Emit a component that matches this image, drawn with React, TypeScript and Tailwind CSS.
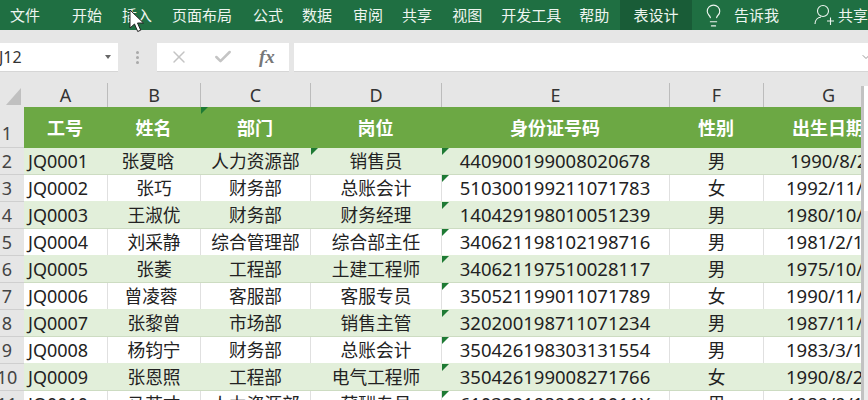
import React from 'react';
import { Check, ChevronDown, Lightbulb, X } from 'lucide-react';

const menuItems = [
  { label: '文件', cls: 'ml-[10px]' },
  { label: '开始', cls: 'ml-[32px]' },
  { label: '插入', cls: 'ml-[20px]' },
  { label: '页面布局', cls: 'ml-[20px]' },
  { label: '公式', cls: 'ml-[21px]' },
  { label: '数据', cls: 'ml-[19px]' },
  { label: '审阅', cls: 'ml-[21px]' },
  { label: '共享', cls: 'ml-[19px]' },
  { label: '视图', cls: 'ml-[20px]' },
  { label: '开发工具', cls: 'ml-[19px]' },
  { label: '帮助', cls: 'ml-[18px]' },
];

const colLetters = [
  { label: 'A', cls: 'w-[84px]' },
  { label: 'B', cls: 'w-[93px]' },
  { label: 'C', cls: 'w-[110px]' },
  { label: 'D', cls: 'w-[131px]' },
  { label: 'E', cls: 'w-[228px]' },
  { label: 'F', cls: 'w-[94px]' },
  { label: 'G', cls: 'w-[130px]' },
];

const rows = [
  ['JQ0001', '张夏晗', '人力资源部', '销售员', '440900199008020678', '男', '1990/8/2'],
  ['JQ0002', '张巧', '财务部', '总账会计', '510300199211071783', '女', '1992/11/'],
  ['JQ0003', '王淑优', '财务部', '财务经理', '140429198010051239', '男', '1980/10/'],
  ['JQ0004', '刘采静', '综合管理部', '综合部主任', '340621198102198716', '男', '1981/2/1'],
  ['JQ0005', '张萎', '工程部', '土建工程师', '340621197510028117', '男', '1975/10/'],
  ['JQ0006', '曾凌蓉', '客服部', '客服专员', '350521199011071789', '女', '1990/11/'],
  ['JQ0007', '张黎曾', '市场部', '销售主管', '320200198711071234', '男', '1987/11/'],
  ['JQ0008', '杨钧宁', '财务部', '总账会计', '350426198303131554', '男', '1983/3/1'],
  ['JQ0009', '张恩照', '工程部', '电气工程师', '350426199008271766', '女', '1990/8/2'],
  ['JQ0010', '马若才', '人力资源部', '薪酬专员', '61032219890910011X', '男', '1989/9/1'],
];

const Flag = () => (
  <span className="absolute left-0 top-0 w-[7px] h-[7px] bg-[#1e7a34] [clip-path:polygon(0_0,100%_0,0_100%)]" />
);

const RowNum = ({ n, cls }: { n: number; cls: string }) => (
  <div className={`w-[24px] shrink-0 flex justify-center pr-[10px] bg-[#e6e6e6] border-b border-[#cfcfcf] text-[18px] text-[#444] ${cls}`}>
    {n}
  </div>
);

const App: React.FC = () => {
  return (
    <div className="relative w-[868px] h-[400px] overflow-hidden bg-[#e6e6e6] font-['Noto_Sans','Noto_Sans_CJK_SC',sans-serif]">
      {/* Ribbon tabs */}
      <div className="h-[30px] flex items-center bg-[#1f6f42] text-[15px] text-[#eef5f0] font-['Noto_Sans_CJK_SC',sans-serif] whitespace-nowrap">
        {menuItems.map((m) => (
          <span key={m.cls + m.label} className={m.cls}>{m.label}</span>
        ))}
        <span className="ml-[11px] h-full w-[73px] flex items-center justify-center bg-[#195c37]">表设计</span>
        <Lightbulb size={25} strokeWidth={1.1} className="ml-[9px] shrink-0" />
        <span className="ml-[8px]">告诉我</span>
        <svg width="20" height="22" viewBox="0 0 20 22" fill="none" stroke="currentColor" strokeWidth="1.1" className="ml-[35px] shrink-0">
          <circle cx="9" cy="7" r="5.5" />
          <path d="M1 20c0-4 3-6.5 6-7M13 17h7M16.5 13.5v7.5" />
        </svg>
        <span className="ml-[4px]">共享</span>
      </div>

      {/* Formula bar */}
      <div className="h-[53px] flex items-start pt-[13px] bg-[#e6e6e6]">
        <div className="w-[118px] h-[29px] flex items-center justify-between bg-white pr-[7px] text-[16px] text-[#333] border-b border-[#d6d6d6]">
          <span className="-ml-[1px]">J12</span>
          <span className="w-0 h-0 border-x-[3px] border-x-transparent border-t-[4px] border-t-[#666]" />
        </div>
        <div className="w-[39px] h-[29px] flex items-center justify-center">
          <div className="flex flex-col gap-[2px]">
            <span className="w-[3px] h-[3px] bg-[#a9a9a9] rounded-full" />
            <span className="w-[3px] h-[3px] bg-[#a9a9a9] rounded-full" />
            <span className="w-[3px] h-[3px] bg-[#a9a9a9] rounded-full" />
          </div>
        </div>
        <div className="w-[132px] h-[29px] flex items-center bg-white border-b border-[#d6d6d6]">
          <X size={20} strokeWidth={1.75} className="ml-[12px] text-[#c4c4c4]" />
          <Check size={20} strokeWidth={3} className="ml-[24px] text-[#c4c4c4]" />
          <span className="ml-[26px] font-['Liberation_Serif',serif] italic font-bold text-[19px] text-[#777]">fx</span>
        </div>
        <div className="ml-[5px] flex-1 h-[29px] flex items-center justify-end bg-white border-b border-[#d6d6d6]">
          <ChevronDown size={12} className="-mr-[4px] text-[#999]" />
        </div>
      </div>

      {/* Sheet */}
      <div className="flex h-[317px]">
        <div className="w-[861px] shrink-0 overflow-hidden">
          <div className="flex h-[24px] w-[894px] bg-[#e6e6e6]">
            <div className="w-[24px] shrink-0 pl-[6px] pt-[5px]">
              <span className="block w-[15px] h-[17px] bg-[#c0c0c0] [clip-path:polygon(100%_0,100%_100%,0_100%)]" />
            </div>
            {colLetters.map((c) => (
              <div key={c.label} className={`${c.cls} shrink-0 flex items-center justify-center border-r border-[#bcbcbc] text-[18px] text-[#333]`}>
                {c.label}
              </div>
            ))}
          </div>

          {/* Header row */}
          <div className="flex h-[41px] w-[894px]">
            <RowNum n={1} cls="items-end" />
            <div className="flex flex-1 bg-[#6ca844] text-[18px] font-bold text-white font-['Noto_Sans_CJK_SC',sans-serif]">
              {['工号', '姓名', '部门', '岗位', '身份证号码', '性别', '出生日期'].map((h, i) => (
                <div key={h} className={`${colLetters[i].cls} relative shrink-0 flex items-center justify-center pr-[2px]`}>
                  {h === '部门' && <Flag />}
                  {h}
                </div>
              ))}
            </div>
          </div>

          {/* Data rows */}
          {rows.map((r, idx) => {
            const green = idx % 2 === 0;
            const rowCls = green ? 'bg-[#e2efda] border-[#cddcc2]' : 'bg-white border-[#e2efda]';
            const line = green ? 'border-[#e2efda]' : 'border-[#e0e0e0]';
            // two names sit left of centre in the sheet
            const namePad = idx === 0 ? 'pr-[12px]' : idx === 5 ? 'pr-[6px]' : '';
            return (
              <div key={r[0]} className="flex h-[27px] w-[894px]">
                <RowNum n={idx + 2} cls="items-center" />
                <div className={`flex flex-1 border-b text-[#222] ${rowCls}`}>
                  <div className={`w-[84px] shrink-0 flex items-center pl-[4px] text-[18px] border-r ${line}`}>{r[0]}</div>
                  <div className={`w-[93px] shrink-0 flex items-center justify-center text-[17.7px] border-r ${line} ${namePad}`}>{r[1]}</div>
                  <div className={`w-[110px] shrink-0 flex items-center justify-center text-[17.7px] border-r ${line}`}>{r[2]}</div>
                  <div className={`relative w-[131px] shrink-0 flex items-center justify-center text-[17.7px] border-r ${line}`}>
                    {idx === 0 && <Flag />}
                    {r[3]}
                  </div>
                  <div className={`relative w-[228px] shrink-0 flex items-center justify-center text-[18.5px] border-r ${line} pr-[1px]`}>
                    <Flag />
                    {r[4]}
                  </div>
                  <div className={`w-[94px] shrink-0 flex items-center justify-center text-[17.7px] border-r ${line}`}>{r[5]}</div>
                  <div className={`w-[130px] shrink-0 flex items-center text-[18.5px] ${idx === 0 ? 'pl-[26px]' : 'pl-[22px]'}`}>{r[6]}</div>
                </div>
              </div>
            );
          })}
        </div>

        {/* Scrollbar */}
        <div className="flex-1 pt-[3px] bg-[#e6e6e6]">
          <div className="h-full border-l-[3px] border-[#c2c2c2] bg-[#ececec]">
            <div className="h-[125px] bg-white" />
          </div>
        </div>
      </div>

      {/* Mouse pointer */}
      <svg width="16" height="24" viewBox="0 0 16 24" className="absolute left-[129px] top-[9px]">
        <path d="M1 1v18l4.5-4 3.2 7.5 3-1.3-3.2-7.2H14.5z" fill="#fff" stroke="#222" strokeWidth="1" strokeLinejoin="round" />
      </svg>
    </div>
  );
};

export default App;
